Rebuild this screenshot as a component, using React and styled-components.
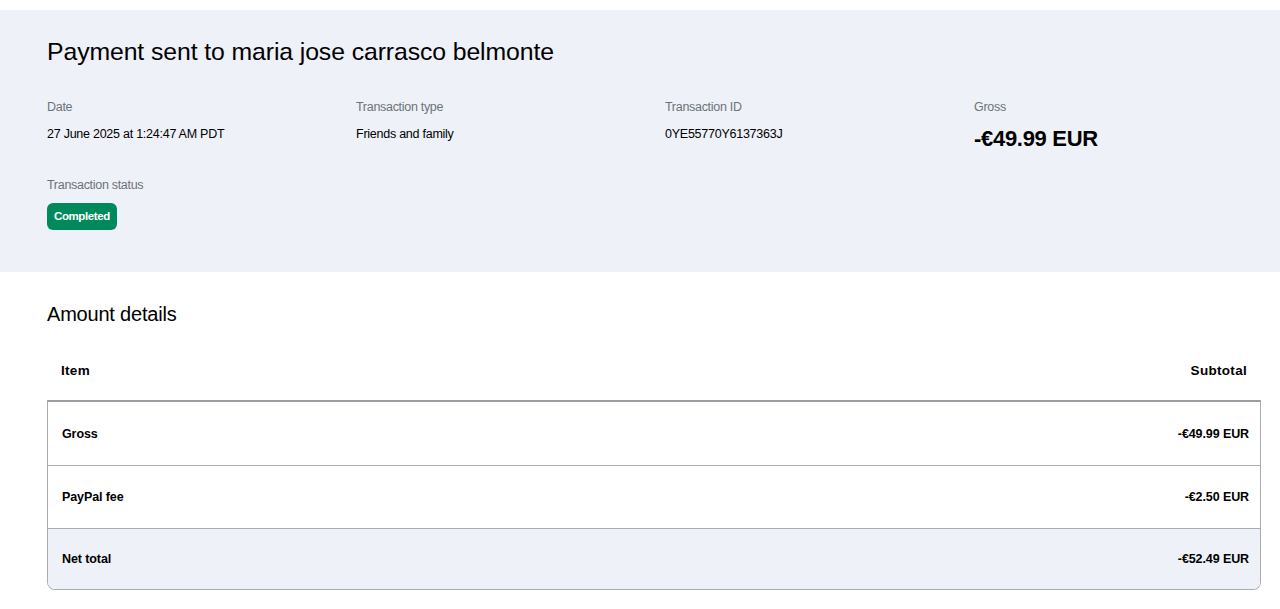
import React from "react";
import styled, { createGlobalStyle } from "styled-components";

const Global = createGlobalStyle`
  html, body { margin: 0; padding: 0; background: #fff; }
  body { font-family: "Liberation Sans", Arial, sans-serif; color: #000; }
  * { box-sizing: border-box; }
`;

const Page = styled.div`
  padding-top: 10px;
  width: 1280px;
`;

const Summary = styled.section`
  background: #eef1f8;
  padding: 28px 0 42px 47px;
`;

const Title = styled.h1`
  margin: 0 0 33px;
  font-size: 24.8px;
  font-weight: 400;
  line-height: 28px;
  letter-spacing: -0.1px;
`;

const Grid = styled.div`
  display: grid;
  grid-template-columns: repeat(4, 309px);
  row-gap: 29px;
`;

const Field = styled.div`
  display: flex;
  flex-direction: column;
  gap: ${(p) => (p.$gap ? p.$gap : 11)}px;
`;

const Label = styled.div`
  font-size: 12.5px;
  line-height: 16px;
  color: #6c7378;
  letter-spacing: -0.3px;
`;

const Value = styled.div`
  font-size: 12.5px;
  line-height: 16px;
  letter-spacing: -0.25px;
`;

const Big = styled.div`
  font-size: 22px;
  font-weight: 700;
  line-height: 19px;
  letter-spacing: -0.3px;
`;

const Badge = styled.span`
  align-self: flex-start;
  background: #008a5b;
  color: #fff;
  font-size: 11.5px;
  font-weight: 700;
  letter-spacing: -0.4px;
  line-height: 27px;
  height: 27px;
  padding: 0 7px;
  border-radius: 6px;
`;

const Details = styled.section`
  padding: 30px 19px 0 47px;
`;

const SubTitle = styled.h2`
  margin: 0 0 14px;
  font-size: 20px;
  font-weight: 400;
  line-height: 24px;
  letter-spacing: -0.2px;
`;

const HeadRow = styled.div`
  display: flex;
  justify-content: space-between;
  padding: 0 14px;
  height: 60px;
  align-items: center;
  font-size: 13.5px;
  font-weight: 700;
  letter-spacing: 0.3px;
`;

const TableBox = styled.div`
  border: 1px solid #a9adb2;
  border-top: 2px solid #9a9ea3;
  border-radius: 0 0 8px 8px;
  overflow: hidden;
`;

const Row = styled.div`
  display: flex;
  justify-content: space-between;
  align-items: center;
  height: ${(p) => p.$h}px;
  padding: 0 11px 0 14px;
  background: ${(p) => (p.$shade ? "#eef1f8" : "#fff")};
  border-top: ${(p) => (p.$first ? "none" : "1px solid #a9adb2")};
  font-size: 12.5px;
  font-weight: 700;
  letter-spacing: -0.1px;
`;

const rows = [
  { item: "Gross", amount: "-€49.99 EUR", h: 63 },
  { item: "PayPal fee", amount: "-€2.50 EUR", h: 63 },
  { item: "Net total", amount: "-€52.49 EUR", h: 61, shade: true },
];

export default function App() {
  return (
    <Page>
      <Global />
      <Summary>
        <Title>Payment sent to maria jose carrasco belmonte</Title>
        <Grid>
          <Field>
            <Label>Date</Label>
            <Value>27 June 2025 at 1:24:47 AM PDT</Value>
          </Field>
          <Field>
            <Label>Transaction type</Label>
            <Value>Friends and family</Value>
          </Field>
          <Field>
            <Label>Transaction ID</Label>
            <Value>0YE55770Y6137363J</Value>
          </Field>
          <Field $gap={14}>
            <Label>Gross</Label>
            <Big>-€49.99 EUR</Big>
          </Field>
          <Field $gap={10}>
            <Label>Transaction status</Label>
            <Badge>Completed</Badge>
          </Field>
        </Grid>
      </Summary>
      <Details>
        <SubTitle>Amount details</SubTitle>
        <HeadRow>
          <span>Item</span>
          <span>Subtotal</span>
        </HeadRow>
        <TableBox>
          {rows.map((r, i) => (
            <Row key={r.item} $h={r.h} $shade={r.shade} $first={i === 0}>
              <span>{r.item}</span>
              <span>{r.amount}</span>
            </Row>
          ))}
        </TableBox>
      </Details>
    </Page>
  );
}
